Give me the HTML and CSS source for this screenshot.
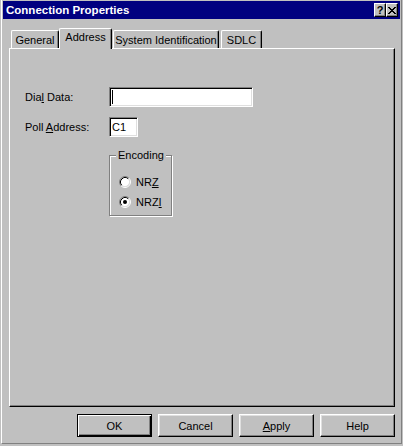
FILE: index.html
```html
<html>
<head>
    <link rel="stylesheet" href="styles.css">
</head>

<body>

<div class="window">
    <div class="titlebar">
        <span class="title">Connection Properties</span>
        <div class="caption-buttons">
            <div class="cap-btn cap-help">?</div>
            <div class="cap-btn">
                <svg width="8" height="7" viewBox="0 0 8 7">
                    <path d="M0 0h2v1h-2z M6 0h2v1h-2z M1 1h2v1h-2z M5 1h2v1h-2z M2 2h4v1h-4z M3 3h2v1h-2z M2 4h4v1h-4z M1 5h2v1h-2z M5 5h2v1h-2z M0 6h2v1h-2z M6 6h2v1h-2z" fill="#000"/>
                </svg>
            </div>
        </div>
    </div>

    <div class="content">
        <div class="tabs">
            <div class="tab tab-general">General</div>
            <div class="tab tab-address active">Address</div>
            <div class="tab tab-system">System Identification</div>
            <div class="tab tab-sdlc">SDLC</div>
        </div>

        <div class="panel">
            <div class="field-row">
                <label class="field-label">Dia<u>l</u> Data:</label>
                <div class="edit edit-wide"><span class="caret"></span></div>
            </div>
            <div class="field-row">
                <label class="field-label">Poll <u>A</u>ddress:</label>
                <div class="edit edit-short">C1</div>
            </div>

            <div class="group">
                <span class="group-label">Encoding</span>
                <div class="radio-row">
                    <svg class="radio" width="12" height="12" viewBox="0 0 12 12">
                        <circle cx="6" cy="6" r="4.5" fill="#fff"/>
                        <path d="M2.11 9.89 A5.5 5.5 0 0 1 9.89 2.11" stroke="#808080" fill="none"/>
                        <path d="M9.89 2.11 A5.5 5.5 0 0 1 2.11 9.89" stroke="#fff" fill="none"/>
                        <path d="M2.82 9.18 A4.5 4.5 0 0 1 9.18 2.82" stroke="#000" fill="none"/>
                        <path d="M9.18 2.82 A4.5 4.5 0 0 1 2.82 9.18" stroke="#dfdfdf" fill="none"/>
                    </svg>
                    <span>NR<u>Z</u></span>
                </div>
                <div class="radio-row">
                    <svg class="radio" width="12" height="12" viewBox="0 0 12 12">
                        <circle cx="6" cy="6" r="4.5" fill="#fff"/>
                        <path d="M2.11 9.89 A5.5 5.5 0 0 1 9.89 2.11" stroke="#808080" fill="none"/>
                        <path d="M9.89 2.11 A5.5 5.5 0 0 1 2.11 9.89" stroke="#fff" fill="none"/>
                        <path d="M2.82 9.18 A4.5 4.5 0 0 1 9.18 2.82" stroke="#000" fill="none"/>
                        <path d="M9.18 2.82 A4.5 4.5 0 0 1 2.82 9.18" stroke="#dfdfdf" fill="none"/>
                        <circle cx="6" cy="6" r="2" fill="#000"/>
                    </svg>
                    <span>NRZ<u>I</u></span>
                </div>
            </div>
        </div>

        <div class="buttons">
            <div class="btn btn-default">OK</div>
            <div class="btn">Cancel</div>
            <div class="btn"><u>A</u>pply</div>
            <div class="btn">Help</div>
        </div>
    </div>
</div>

</body>
</html>
```

FILE: styles.css
```css
body {
    margin: 0;
    background-color: #c0c0c0;
    font-family: "Liberation Sans", Arial, sans-serif;
    font-size: 11px;
    color: #000;
}

.window {
    box-sizing: border-box;
    width: 401px;
    height: 444px;
    margin-left: 1px;
    padding: 1px;
    border-left: 1px solid #fff;
    border-right: 1px solid #808080;
    border-bottom: 1px solid #808080;
}

.titlebar {
    height: 18px;
    background-color: #000080;
    display: flex;
    align-items: center;
    padding: 0 2px 0 3px;
}

.title {
    color: #fff;
    font-weight: bold;
    font-size: 11.5px;
}

.caption-buttons {
    margin-left: auto;
    display: flex;
}

.cap-btn {
    box-sizing: border-box;
    width: 12px;
    height: 14px;
    background-color: #c0c0c0;
    border-top: 1px solid #fff;
    border-left: 1px solid #fff;
    border-right: 1px solid #000;
    border-bottom: 1px solid #000;
    box-shadow: inset -1px -1px #808080;
    display: flex;
    align-items: center;
    justify-content: center;
}

.cap-help {
    font-weight: bold;
    font-size: 11px;
    line-height: 12px;
}

.content {
    padding: 9px 5px 0 6px;
}

/* tab strip */
.tabs {
    display: flex;
    align-items: flex-end;
    height: 20px;
    padding-left: 2px;
}

.tab {
    box-sizing: border-box;
    height: 18px;
    border-top: 1px solid #fff;
    border-left: 1px solid #fff;
    border-right: 1px solid #000;
    border-radius: 2px 2px 0 0;
    box-shadow: inset -1px 0 #808080;
    display: flex;
    align-items: center;
    justify-content: center;
}

.tab.active {
    height: 21px;
    margin-bottom: -1px;
    padding-bottom: 4px;
    position: relative;
    z-index: 1;
    background-color: #c0c0c0;
}

.tab-general { width: 48px; }
.tab-address { width: 53px; }
.tab-system { width: 106px; margin-left: 1px; }
.tab-sdlc { width: 41px; margin-left: 2px; }

.panel {
    box-sizing: border-box;
    width: 386px;
    height: 359px;
    border-top: 1px solid #fff;
    border-left: 1px solid #fff;
    border-right: 1px solid #000;
    border-bottom: 1px solid #000;
    box-shadow: inset -1px -1px #808080;
    padding: 38px 0 0 15px;
}

.field-row {
    display: flex;
    align-items: center;
    margin-bottom: 10px;
}

.field-label {
    width: 84px;
}

.edit {
    box-sizing: border-box;
    height: 20px;
    padding: 0 2px;
    background-color: #fff;
    border-top: 1px solid #808080;
    border-left: 1px solid #808080;
    border-right: 1px solid #fff;
    border-bottom: 1px solid #fff;
    box-shadow: inset 1px 1px #000, inset -1px -1px #dfdfdf;
    display: flex;
    align-items: center;
}

.edit-wide { width: 144px; }
.edit-short { width: 29px; }

.caret {
    width: 1px;
    height: 14px;
    background-color: #000;
}

/* etched group box */
.group {
    position: relative;
    box-sizing: border-box;
    width: 63px;
    height: 61px;
    margin: 18px 0 0 84px;
    padding: 16px 0 0 9px;
    border: 1px solid #808080;
    box-shadow: inset 1px 1px #fff, 1px 1px #fff;
}

.group-label {
    position: absolute;
    top: -7px;
    left: 6px;
    padding: 0 2px;
    line-height: 13px;
    background-color: #c0c0c0;
}

.radio-row {
    display: flex;
    align-items: center;
    height: 20px;
}

.radio {
    margin-right: 5px;
}

.buttons {
    display: flex;
    justify-content: flex-end;
    gap: 6px;
    width: 386px;
    margin-top: 7px;
}

.btn {
    box-sizing: border-box;
    width: 75px;
    height: 23px;
    background-color: #c0c0c0;
    border-top: 1px solid #fff;
    border-left: 1px solid #fff;
    border-right: 1px solid #000;
    border-bottom: 1px solid #000;
    box-shadow: inset -1px -1px #808080, inset 1px 1px #dfdfdf;
    display: flex;
    align-items: center;
    justify-content: center;
}

.btn-default {
    border: 1px solid #000;
    box-shadow: inset 1px 1px #fff, inset -1px -1px #000, inset -2px -2px #808080;
}
```
